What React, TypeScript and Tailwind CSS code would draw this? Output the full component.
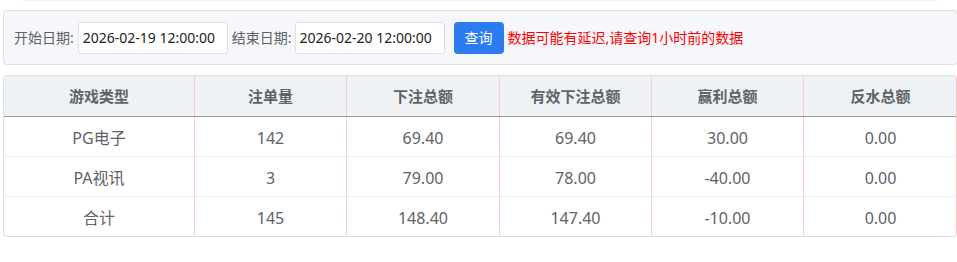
const rows = [
  ['PG电子', '142', '69.40', '69.40', '30.00', '0.00'],
  ['PA视讯', '3', '79.00', '78.00', '-40.00', '0.00'],
  ['合计', '145', '148.40', '147.40', '-10.00', '0.00'],
];

const heads = ['游戏类型', '注单量', '下注总额', '有效下注总额', '赢利总额', '反水总额'];

const cols = 'grid grid-cols-[191px_152px_153px_152px_152px_153px]';

function DateInput({ value }: { value: string }) {
  return (
    <div className="flex h-[32px] w-[150px] items-center rounded-[3px] border border-[#dcdfe6] bg-white pl-[4px] text-[14px] text-[#222]">
      {value}
    </div>
  );
}

export default function App() {
  return (
    <div
      className="h-[262px] w-[957px] overflow-hidden bg-white pl-[3px]"
      style={{ fontFamily: '"Noto Sans", "Noto Sans CJK SC", sans-serif' }}
    >
      {/* faint edge of the card above */}
      <div className="mx-[20px] h-[2px] rounded-b bg-[#f6f6f6]" />

      {/* Filter bar */}
      <div className="mt-[8px] flex h-[55px] w-[955px] items-center gap-[4px] rounded-[4px] border border-[#dcdfe6] bg-[#f5f7fa] pl-[10px]">
        <span className="text-[14px] text-[#606266]">开始日期:</span>
        <DateInput value="2026-02-19 12:00:00" />
        <span className="-mr-[1px] text-[14px] text-[#606266]">结束日期:</span>
        <DateInput value="2026-02-20 12:00:00" />
        <button className="ml-[5px] h-[32px] w-[50px] rounded-[4px] bg-[#2b7cf0] text-[14px] text-white">
          查询
        </button>
        <span className="text-[14px] text-[#ff0000]">数据可能有延迟,请查询1小时前的数据</span>
      </div>

      {/* Summary table */}
      <div className="mt-[10px] w-[954px] overflow-hidden rounded-[4px] border border-[#dcdfe6] border-r-[#f2c8c8] text-center text-[16px] text-[#606266]">
        <div className={`${cols} h-[41px] border-b border-[#a09a9a] bg-[#eff2f5] text-[15px] font-bold`}>
          {heads.map((h, i) => (
            <div
              key={h}
              className={`flex items-center justify-center ${i < 5 ? 'border-r border-[#f5cfcf]' : ''}`}
            >
              {h}
            </div>
          ))}
        </div>
        {rows.map((r, ri) => (
          <div
            key={r[0]}
            className={`${cols} ${ri < rows.length - 1 ? 'h-[40px] border-b border-[#ebeef5]' : 'h-[39px]'}`}
          >
            {r.map((c, i) => (
              <div
                key={i}
                className={`flex items-center justify-center pt-[2px] ${i < 5 ? 'border-r border-[#f5cfcf]' : ''}`}
              >
                {c}
              </div>
            ))}
          </div>
        ))}
      </div>
    </div>
  );
}
